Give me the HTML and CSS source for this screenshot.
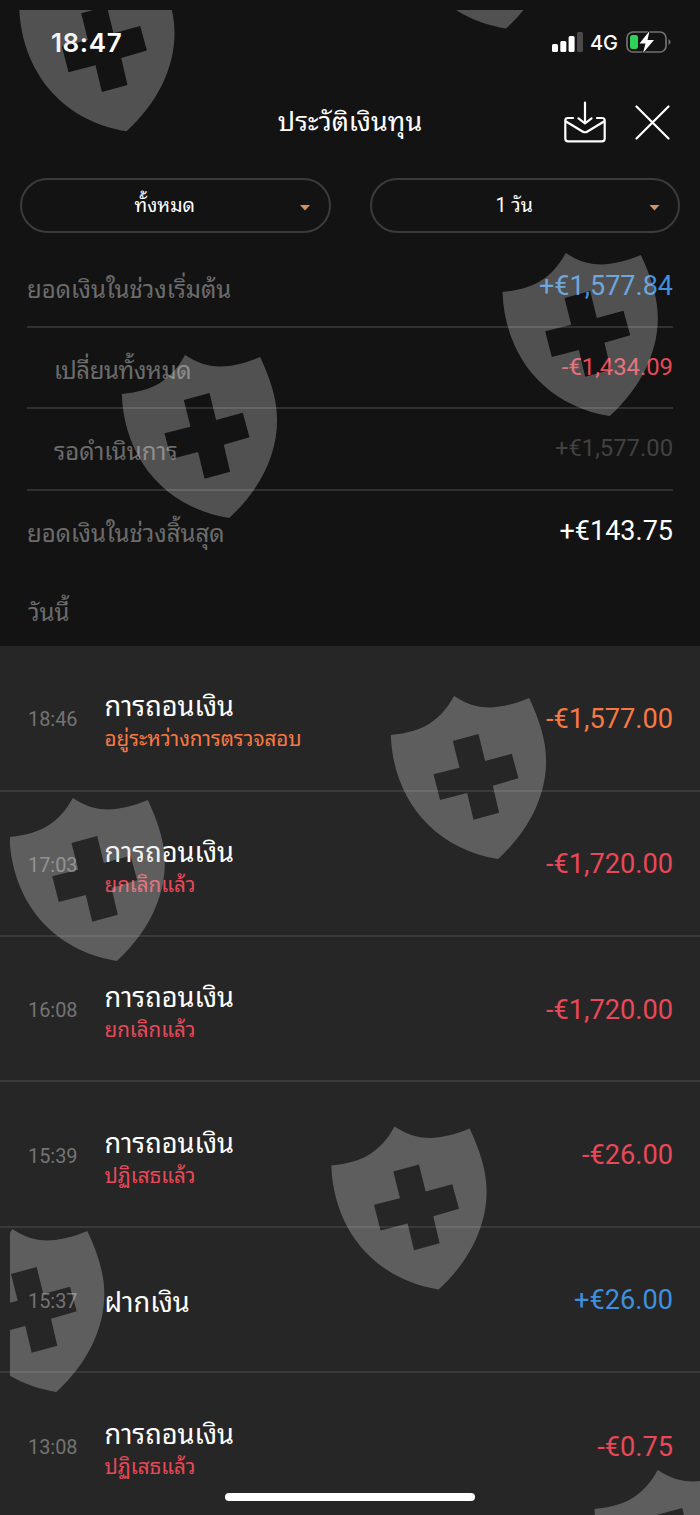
FILE: index.html
```html
<!DOCTYPE html>
<html lang="th">
<head>
<meta charset="utf-8">
<title>ประวัติเงินทุน</title>
<link rel="stylesheet" href="styles.css">
</head>
<body>
<div class="screen">
  <div class="status">
    <span class="clock">18:47</span>
    <div class="status-right">
      <svg class="signal" width="31" height="20" viewBox="0 0 31 20">
        <rect x="0" y="12" width="6" height="8" rx="1.5" fill="#fff"/>
        <rect x="8.3" y="9" width="6" height="11" rx="1.5" fill="#fff"/>
        <rect x="16.6" y="4" width="6" height="16" rx="1.5" fill="#fff"/>
        <rect x="25" y="0" width="6" height="20" rx="1.5" fill="#4a4a4a"/>
      </svg>
      <span class="network">4G</span>
      <svg class="battery" width="46" height="24" viewBox="0 0 46 24">
        <rect x="1" y="2" width="39" height="20" rx="6" fill="none" stroke="#727272" stroke-width="1.7"/>
        <rect x="4" y="5" width="8" height="14" rx="2.5" fill="#30d158"/>
        <path d="M42.5 9Q44.5 10 44.5 12T42.5 15Z" fill="#727272"/>
        <path d="M23.5 1 13.500 13.500H19.500L17 23 28 10H21.500Z" fill="#fff" stroke="#131313" stroke-width="1.500" paint-order="stroke"/>
      </svg>
    </div>
  </div>

  <div class="titlebar">
    <h1 class="title">ประวัติเงินทุน</h1>
    <div class="actions">
      <svg width="42" height="42" viewBox="0 0 42 42" fill="none" stroke="#fff" stroke-width="2.200" stroke-linecap="round" stroke-linejoin="round">
        <path d="M9 17H4Q1.300 17 1.300 19.500V37.500Q1.300 40.300 4 40.300H38Q40.700 40.300 40.700 37.500V19.500Q40.700 17 38 17H33M2 20.500 18.500 30.500Q21 32 23.500 30.500L40 20.500M21 1.500V22M14.500 17.300 21 22.500 27.500 17.300"/>
      </svg>
      <svg width="35" height="35" viewBox="0 0 35 35" fill="none" stroke="#fff" stroke-width="2.200" stroke-linecap="round">
        <path d="M1.500 1.500 33.500 33.500M33.500 1.500 1.500 33.500"/>
      </svg>
    </div>
  </div>

  <div class="filters">
    <div class="filter"><span class="filter-text">ทั้งหมด</span><i class="caret"></i></div>
    <div class="filter"><span class="filter-text">1 วัน</span><i class="caret"></i></div>
  </div>

  <div class="summary">
    <div class="line"><span class="label">ยอดเงินในช่วงเริ่มต้น</span><span class="sum blue">+€1,577.84</span></div>
    <div class="line inner"><span class="label narrow">เปลี่ยนทั้งหมด</span><span class="sum red">-€1,434.09</span></div>
    <div class="line inner"><span class="label">รอดำเนินการ</span><span class="sum dim">+€1,577.00</span></div>
    <div class="line"><span class="label">ยอดเงินในช่วงสิ้นสุด</span><span class="sum white">+€143.75</span></div>
  </div>

  <div class="group"><span class="label">วันนี้</span></div>

  <div class="list">
    <div class="row"><span class="time">18:46</span><div class="what"><span class="name">การถอนเงิน</span><span class="state orange">อยู่ระหว่างการตรวจสอบ</span></div><span class="amount orange">-€1,577.00</span></div>
    <div class="row"><span class="time">17:03</span><div class="what"><span class="name">การถอนเงิน</span><span class="state red">ยกเลิกแล้ว</span></div><span class="amount red">-€1,720.00</span></div>
    <div class="row"><span class="time">16:08</span><div class="what"><span class="name">การถอนเงิน</span><span class="state red">ยกเลิกแล้ว</span></div><span class="amount red">-€1,720.00</span></div>
    <div class="row"><span class="time">15:39</span><div class="what"><span class="name">การถอนเงิน</span><span class="state red">ปฏิเสธแล้ว</span></div><span class="amount red">-€26.00</span></div>
    <div class="row"><span class="time">15:37</span><div class="what"><span class="name">ฝากเงิน</span></div><span class="amount blue">+€26.00</span></div>
    <div class="row"><span class="time">13:08</span><div class="what"><span class="name">การถอนเงิน</span><span class="state red">ปฏิเสธแล้ว</span></div><span class="amount red">-€0.75</span></div>
  </div>

  <svg class="watermark" width="690" height="1505" viewBox="10 10 690 1505">
    <defs>
      <path id="shield" fill-rule="evenodd" d="M0 39C33 36 50 24 63.300 0C83 13.500 105 16 138.300 2C152 31 155.300 50 155.300 65C155.300 100 138 135 107.300 163C40 152 2 100 0 39ZM62 45 87.700 38 94.300 65 121 57.700 127.700 82.300 102 89.700 108.300 116.700 82.700 123.700 76.300 97 49.300 104 42.700 78.300 68.700 71.700Z"/>
    </defs>
    <use href="#shield" x="19.200" y="-31.700"/>
    <use href="#shield" x="398.700" y="-134.500"/>
    <use href="#shield" x="502.500" y="253"/>
    <use href="#shield" x="121.800" y="355"/>
    <use href="#shield" x="390.800" y="696"/>
    <use href="#shield" x="9.500" y="798"/>
    <use href="#shield" x="331.300" y="1126.500"/>
    <use href="#shield" x="-51" y="1229"/>
    <use href="#shield" x="594.500" y="1470"/>
  </svg>
  <div class="home"></div>
</div>
</body>
</html>
```
FILE: styles.css
```css
* { box-sizing: border-box; }
body { margin: 0; background: #131313; }
.screen {
  position: relative;
  width: 700px;
  height: 1515px;
  overflow: hidden;
  background: #131313;
  color: #fff;
  font-family: Roboto, "Noto Sans Thai Looped", Loma, Garuda, Umpush, Waree, "Noto Sans Thai", sans-serif;
}
.status {
  height: 84px;
  padding: 0 28px 0 51px;
  display: flex;
  justify-content: space-between;
  align-items: center;
}
.clock { font: 600 26px Inter, sans-serif; letter-spacing: 0.600px; }
.status-right { display: flex; align-items: center; }
.network { font: 500 20px Inter, sans-serif; margin: 2px 8px 0 7px; }
.titlebar {
  position: relative;
  height: 76px;
  display: flex;
  justify-content: center;
  align-items: center;
}
.title { margin: 0; padding-bottom: 7px; font-size: 26.900px; font-weight: 400; }
.actions {
  position: absolute;
  right: 30px;
  top: 17px;
  display: flex;
  gap: 29px;
  align-items: center;
}
.filters { display: flex; gap: 39px; padding: 18px 20px 0; }
.filter {
  width: 310.500px;
  height: 55px;
  border: 2px solid #3b3b3b;
  border-radius: 28px;
  display: flex;
  align-items: center;
  padding: 0 18px 0 8px;
  font-size: 19.500px;
}
.filter-text { flex: 1; text-align: center; padding-bottom: 5px; }
.caret {
  width: 11px;
  height: 6px;
  margin-top: 4px;
  background: #d3925f;
  clip-path: polygon(0 0, 100% 0, 50% 100%);
}
.summary { padding: 14px 27px 0; }
.line {
  height: 81.200px;
  border-bottom: 2px solid #303030;
  display: flex;
  align-items: center;
  justify-content: space-between;
}
.line:last-child { border-bottom: 0; }
.label { font-size: 24px; color: #6c6c6c; white-space: nowrap; }
.inner .label { margin-left: 27px; }
.narrow { letter-spacing: -0.400px; }
.sum { font-size: 27px; margin-top: -1px; }
.inner .sum { font-size: 23.800px; margin-top: -2px; }
.group { height: 74.400px; padding: 19px 28px 0; }
.blue { color: #3f8fdf; }
.red { color: #e94858; }
.orange { color: #f87843; }
.dim { color: #414141; }
.white { color: #fff; }
.list { background: #262626; }
.row {
  height: 145.400px;
  padding: 2px 27px 0 28px;
  display: flex;
  align-items: center;
  border-bottom: 2px solid #3a3a3a;
}
.row:last-child { border-bottom: 0; }
.time { width: 76.500px; font-size: 19.900px; color: #747474; padding-top: 2px; }
.what { flex: 1; display: flex; flex-direction: column; padding-top: 5px; }
.name { font-size: 27.200px; line-height: 36px; }
.state { font-size: 20.600px; line-height: 28px; }
.amount { font-size: 27.200px; }
.watermark { position: absolute; left: 10px; top: 10px; fill: rgba(214, 214, 214, 0.32); }
.home {
  position: absolute;
  left: 225px;
  top: 1493px;
  width: 250px;
  height: 8px;
  border-radius: 4px;
  background: #fff;
}
```
